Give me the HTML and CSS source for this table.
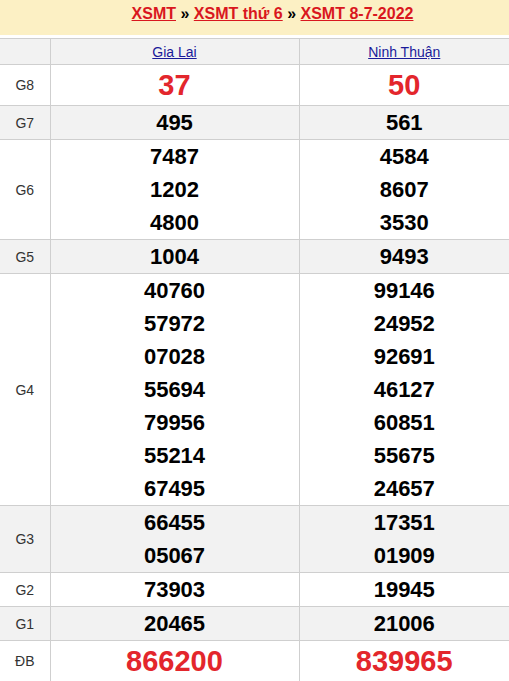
FILE: index.html
```html
<!DOCTYPE html>
<html lang="vi">
<head>
<meta charset="utf-8">
<title>XSMT 8-7-2022</title>
<link rel="stylesheet" href="styles.css">
</head>
<body>
<div class="crumb">
  <a href="#">XSMT</a> » <a href="#">XSMT thứ 6</a> » <a href="#">XSMT 8-7-2022</a>
</div>
<table class="kq">
  <colgroup><col class="c-lbl"><col class="c-a"><col class="c-b"></colgroup>
  <tr class="head"><td></td><td><a href="#">Gia Lai</a></td><td><a href="#">Ninh Thuận</a></td></tr>
  <tr class="big"><td class="lbl">G8</td><td><div class="n red">37</div></td><td><div class="n red">50</div></td></tr>
  <tr class="alt"><td class="lbl">G7</td><td><div class="n">495</div></td><td><div class="n">561</div></td></tr>
  <tr><td class="lbl">G6</td><td><div class="n">7487</div><div class="n">1202</div><div class="n">4800</div></td><td><div class="n">4584</div><div class="n">8607</div><div class="n">3530</div></td></tr>
  <tr class="alt"><td class="lbl">G5</td><td><div class="n">1004</div></td><td><div class="n">9493</div></td></tr>
  <tr><td class="lbl">G4</td><td><div class="n">40760</div><div class="n">57972</div><div class="n">07028</div><div class="n">55694</div><div class="n">79956</div><div class="n">55214</div><div class="n">67495</div></td><td><div class="n">99146</div><div class="n">24952</div><div class="n">92691</div><div class="n">46127</div><div class="n">60851</div><div class="n">55675</div><div class="n">24657</div></td></tr>
  <tr class="alt"><td class="lbl">G3</td><td><div class="n">66455</div><div class="n">05067</div></td><td><div class="n">17351</div><div class="n">01909</div></td></tr>
  <tr><td class="lbl">G2</td><td><div class="n">73903</div></td><td><div class="n">19945</div></td></tr>
  <tr class="alt"><td class="lbl">G1</td><td><div class="n">20465</div></td><td><div class="n">21006</div></td></tr>
  <tr class="big"><td class="lbl">ĐB</td><td><div class="n red">866200</div></td><td><div class="n red">839965</div></td></tr>
</table>
</body>
</html>
```
FILE: styles.css
```css
html, body {
  margin: 0;
  padding: 0;
  background: #fff;
  font-family: "Liberation Sans", Arial, sans-serif;
}
.crumb {
  background: #fcf0c4;
  height: 35px;
  line-height: 27px;
  padding-left: 36px;
  text-align: center;
  font-size: 16px;
  font-weight: bold;
  color: #000;
  margin-bottom: 3px;
}
.crumb a {
  color: #d9171e;
  text-decoration: underline;
}
.kq {
  width: 100%;
  border-collapse: collapse;
  table-layout: fixed;
}
.c-lbl { width: 50px; }
.c-a { width: 249px; }
.kq td {
  border: 1px solid #cfcfcf;
  padding: 0;
  text-align: center;
  vertical-align: middle;
}
.kq tr td:first-child { border-left: none; }
.kq tr td:last-child { border-right: none; }
.head td {
  background: #f2f2f2;
  height: 25px;
  font-size: 14px;
}
.head a {
  color: #1a1a9a;
  text-decoration: underline;
}
.alt td { background: #f2f2f2; }
.lbl {
  font-size: 14px;
  color: #333;
}
.n {
  height: 33px;
  line-height: 33px;
  font-size: 22px;
  font-weight: bold;
  color: #000;
}
.big .n {
  height: 40px;
  line-height: 40px;
}
.n.red {
  color: #e3262c;
  font-size: 29px;
}
```
